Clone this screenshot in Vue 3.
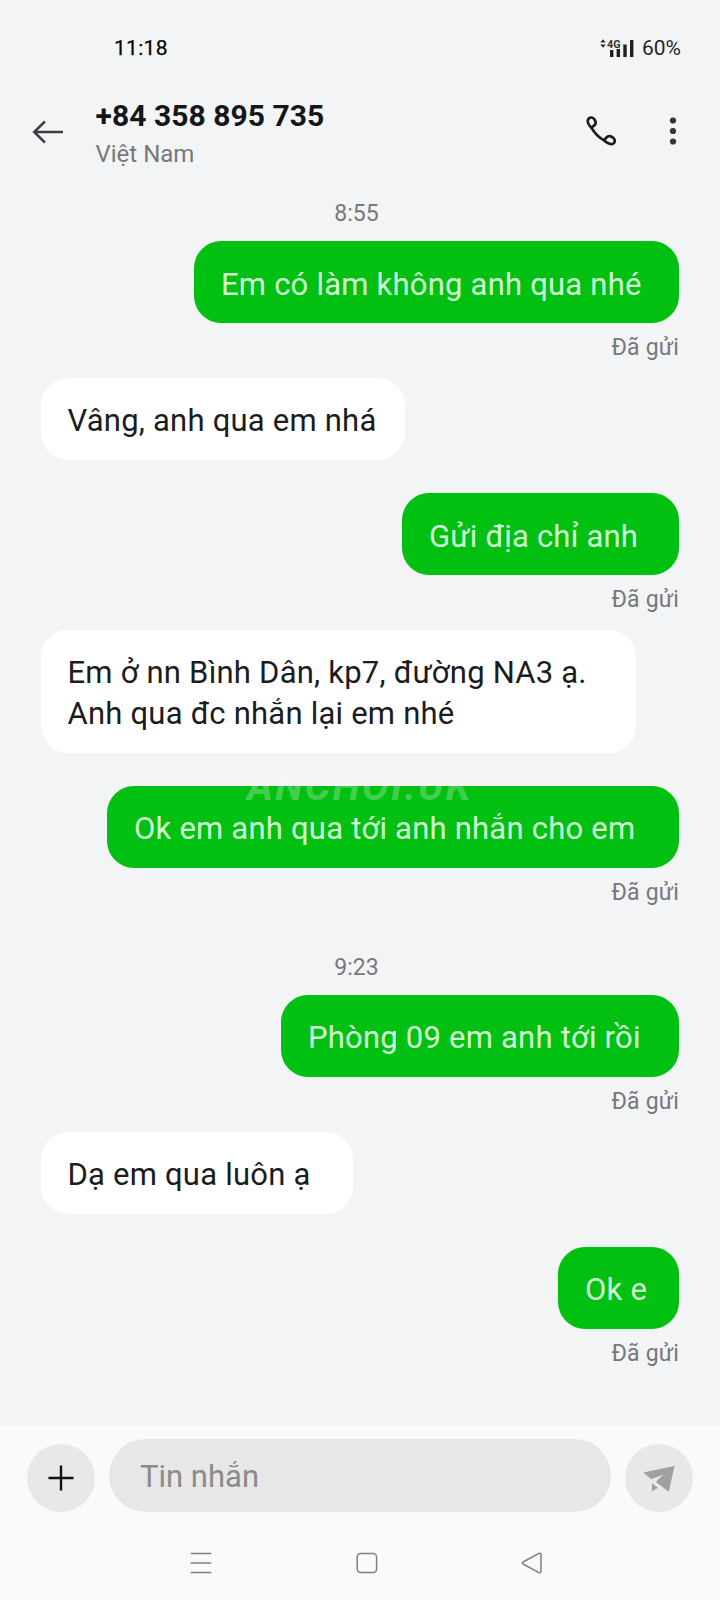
<script setup>
const thread = [
  { kind: 'time', text: '8:55', gap: 11 },
  { kind: 'out', lines: ['Em có làm không anh qua nhé'], width: 485, gap: 16 },
  { kind: 'status', text: 'Đã gửi', gap: 12 },
  { kind: 'in', lines: ['Vâng, anh qua em nhá'], width: 364, gap: 19 },
  { kind: 'out', lines: ['Gửi địa chỉ anh'], width: 277, gap: 33 },
  { kind: 'status', text: 'Đã gửi', gap: 12 },
  { kind: 'in', lines: ['Em ở nn Bình Dân, kp7, đường NA3 ạ.', 'Anh qua đc nhắn lại em nhé'], width: 595, gap: 19 },
  { kind: 'out', lines: ['Ok em anh qua tới anh nhắn cho em'], width: 572, gap: 33, mark: 'ANCHOI.UK' },
  { kind: 'status', text: 'Đã gửi', gap: 12 },
  { kind: 'time', text: '9:23', gap: 51 },
  { kind: 'out', lines: ['Phòng 09 em anh tới rồi'], width: 398, gap: 16 },
  { kind: 'status', text: 'Đã gửi', gap: 12 },
  { kind: 'in', lines: ['Dạ em qua luôn ạ'], width: 312, gap: 19 },
  { kind: 'out', lines: ['Ok e'], width: 121, gap: 33 },
  { kind: 'status', text: 'Đã gửi', gap: 12 },
]
</script>

<template>
  <div class="phone">
    <div class="statusbar">
      <span class="clock">11:18</span>
      <div class="sys">
        <svg class="signal" width="36" height="20" viewBox="0 0 36 20">
          <path d="M0.300 4.500L3 1.200L5.700 4.500ZM0.300 6.500L3 9.800L5.700 6.500Z" fill="#2b2c2e" />
          <text x="7" y="10" class="net" textLength="13.500" lengthAdjust="spacingAndGlyphs">4G</text>
          <g fill="#1d1e20">
            <rect x="10" y="12" width="3.400" height="7" />
            <rect x="16.600" y="11" width="3.400" height="8" />
            <rect x="23.300" y="6.500" width="3.400" height="12.500" />
            <rect x="30" y="2" width="3.400" height="17" />
          </g>
        </svg>
        <span class="battery">60%</span>
      </div>
    </div>

    <header class="header">
      <svg class="back" width="32" height="24" viewBox="0 0 32 24" fill="none" stroke="#3d3e42" stroke-width="2.500">
        <path d="M31 12H2.500M13 1.300L2.200 12L13 22.700" />
      </svg>
      <div class="who">
        <div class="number">+84 358 895 735</div>
        <div class="country">Việt Nam</div>
      </div>
      <svg class="call" width="32" height="32" viewBox="0 0 32 32" fill="none" stroke="#1b1c1e" stroke-width="2.700" stroke-linejoin="round">
        <path d="M6.800 13.200C3.300 9.600 1.800 5.600 3.800 3.500C5.200 2.100 7.800 2 9.300 4.300C11.300 7.300 11.200 8.800 9.500 10.300C8.300 11.400 6.800 11.700 6.800 13.200C9.500 18.200 13.500 22.200 18.700 25.200C22.400 28.300 27 30.500 29 28C30.400 26 29.700 23.800 27.300 22.200C24.900 20.600 23 20.700 21.500 22.400C20.400 23.700 20.200 25 18.700 25.200" />
      </svg>
      <svg class="more" width="8" height="30" viewBox="0 0 8 30" fill="#343539">
        <circle cx="4" cy="4.500" r="3.100" /><circle cx="4" cy="15" r="3.100" /><circle cx="4" cy="25.500" r="3.100" />
      </svg>
    </header>

    <main class="thread">
      <div v-for="(m, i) in thread" :key="i" :class="['row', m.kind]" :style="{ marginTop: m.gap + 'px' }">
        <span v-if="m.text">{{ m.text }}</span>
        <div v-else class="bubble" :style="{ width: m.width + 'px' }">
          <div v-for="line in m.lines" :key="line" class="line">{{ line }}</div>
        </div>
        <span v-if="m.mark" class="mark">{{ m.mark }}</span>
      </div>
    </main>

    <footer class="footer">
      <div class="composer">
        <div class="round">
          <svg width="26" height="26" viewBox="0 0 26 26" stroke="#111" stroke-width="2.400"><path d="M0.500 13H25.500M13 0.500V25.500" /></svg>
        </div>
        <div class="field">Tin nhắn</div>
        <div class="round">
          <svg width="32" height="28" viewBox="0 0 32 28" fill="#a0a0a0">
            <path d="M0.300 8.500L31.500 2L25.800 27.700L12.800 18L20.500 10.500L8.300 15.200Z" />
            <path d="M9.200 19.300L15 23.700L8.800 27.500Z" />
          </svg>
        </div>
      </div>
      <nav class="nav">
        <svg width="22" height="22" viewBox="0 0 22 22" stroke="#808080" stroke-width="1.500"><path d="M0.700 1.500H21.300M0.700 11H21.300M0.700 20.500H21.300" /></svg>
        <svg width="22" height="22" viewBox="0 0 22 22" fill="none" stroke="#808080" stroke-width="1.500"><rect x="1.200" y="1.500" width="19.400" height="19" rx="3.500" /></svg>
        <svg width="22" height="22" viewBox="0 0 22 22" fill="none" stroke="#808080" stroke-width="1.500" stroke-linejoin="round"><path d="M2 10Q0.700 11 2 12L17.500 20.400Q20 21.300 20 19V3Q20 0.700 17.500 1.600Z" /></svg>
      </nav>
    </footer>
  </div>
</template>

<style>
body { background: #f3f4f6; }
</style>

<style scoped>
.phone {
  display: flex;
  flex-direction: column;
  width: 720px;
  height: 1600px;
  overflow: hidden;
  background: #f3f4f6;
  font-family: Roboto, "Noto Sans", sans-serif;
}
.statusbar {
  display: flex;
  justify-content: space-between;
  align-items: center;
  box-sizing: border-box;
  height: 96px;
  padding: 0 39px 1px 114px;
  line-height: 24px;
  color: #050505;
}
.clock { font-size: 21px; letter-spacing: 0.3px; -webkit-text-stroke: 0.25px currentColor; }
.sys { display: flex; align-items: center; gap: 6px; }
.net { font: 700 11px Roboto, sans-serif; fill: #333; }
.battery { font-size: 21px; color: #252628; }
.header { display: flex; align-items: flex-start; height: 94px; padding: 0 43px 0 32px; }
.back { margin-top: 24px; }
.who { flex: 1; margin-left: 31.5px; }
.number { margin-top: 1px; font-size: 30px; font-weight: 700; line-height: 38px; letter-spacing: 0.05px; white-space: nowrap; color: #15161a; }
.country { margin-top: 1px; font-size: 24px; line-height: 36px; color: #77787b; }
.call { margin: 19px 52px 0 0; }
.more { margin-top: 20px; }
.thread { flex: none; height: 1236px; padding: 0 41px; display: flow-root; }
.row { position: relative; display: flex; }
.time, .status { box-sizing: border-box; height: 24px; font-size: 23px; line-height: 26px; color: #77787b; }
.time { justify-content: center; padding-right: 7px; }
.status { letter-spacing: 0.2px; }
.status, .out { justify-content: flex-end; }
.bubble { box-sizing: border-box; padding: 23.5px 0 18px 27px; border-radius: 27px; }
.out .bubble { background: #02c012; color: #d0fbd4; }
.in .bubble { padding: 23px 0 18.5px 27px; background: #fff; color: #1b1c1e; }
.in .line { margin-left: -0.5px; }
.line { font-size: 31px; line-height: 40.5px; letter-spacing: 0.22px; white-space: nowrap; }
.mark {
  position: absolute;
  left: 206px;
  top: -23px;
  font-size: 40px;
  line-height: 48px;
  letter-spacing: 2.2px;
  font-weight: 700;
  font-style: italic;
  color: rgba(255, 255, 255, 0.27);
}
.footer { flex: 1; background: #fafafa; }
.composer { display: flex; align-items: flex-end; gap: 14px; padding: 13px 27px 0; }
.round { display: flex; align-items: center; justify-content: center; width: 68px; height: 68px; border-radius: 50%; background: #e8e8e8; }
.field {
  flex: 1;
  height: 73px;
  padding-left: 31px;
  border-radius: 37px;
  background: #e7e7e7;
  font-size: 31px;
  line-height: 75px;
  color: #8b8b8b;
}
.nav { display: flex; justify-content: space-between; padding: 40px 177px 0 190px; }
</style>
